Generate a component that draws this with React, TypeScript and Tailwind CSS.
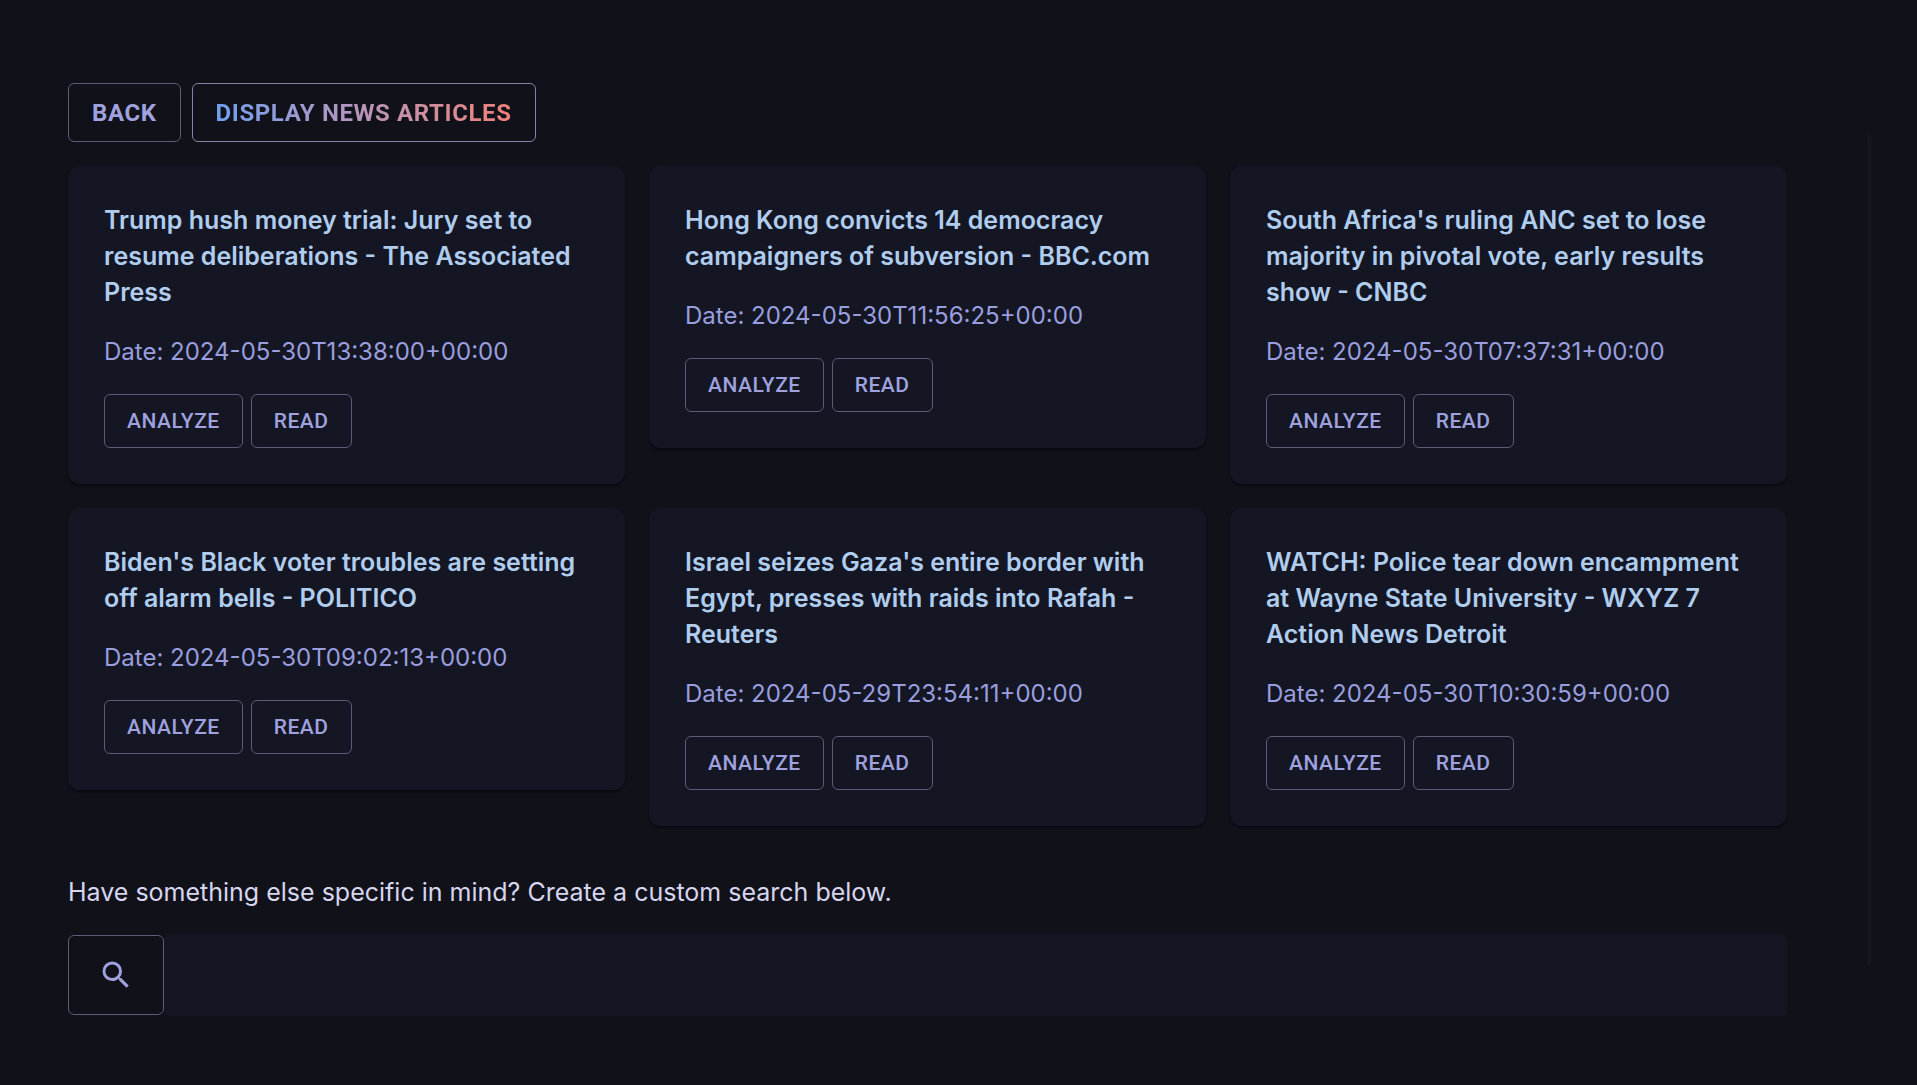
import React, { useState } from "react"
import { MdSearch } from "react-icons/md"

interface Article {
    title: string;
    date: string;
}

const articles: Article[] = [
    {
        title: "Trump hush money trial: Jury set to resume deliberations - The Associated Press",
        date: "2024-05-30T13:38:00+00:00",
    },
    {
        title: "Hong Kong convicts 14 democracy campaigners of subversion - BBC.com",
        date: "2024-05-30T11:56:25+00:00",
    },
    {
        title: "South Africa's ruling ANC set to lose majority in pivotal vote, early results show - CNBC",
        date: "2024-05-30T07:37:31+00:00",
    },
    {
        title: "Biden's Black voter troubles are setting off alarm bells - POLITICO",
        date: "2024-05-30T09:02:13+00:00",
    },
    {
        title: "Israel seizes Gaza's entire border with Egypt, presses with raids into Rafah - Reuters",
        date: "2024-05-29T23:54:11+00:00",
    },
    {
        title: "WATCH: Police tear down encampment at Wayne State University - WXYZ 7 Action News Detroit",
        date: "2024-05-30T10:30:59+00:00",
    },
]

function CardButton({ children }: { children: React.ReactNode }) {
    return (
        <button
            type="button"
            className="h-[54px] px-[22px] border border-[#5a5c78] rounded-md font-[Roboto,sans-serif] text-[21px] font-medium tracking-wide uppercase text-[#9fa2de] hover:bg-white/5"
        >
            {children}
        </button>
    )
}

function ArticleCard({ title, date }: Article) {
    return (
        <article className="p-9 rounded-xl bg-[#141624] shadow-[0_2px_2px_#0a0a12]">
            <h2 className="text-[25px] leading-9 font-semibold text-[#b0cdee]">{title}</h2>
            <p className="mt-6 text-[#9a9ede]">Date: {date}</p>
            <div className="mt-6 flex gap-2">
                <CardButton>Analyze</CardButton>
                <CardButton>Read</CardButton>
            </div>
        </article>
    )
}

export default function App() {
    const [query, setQuery] = useState("")

    return (
        <div className="min-h-screen flex bg-[#11111a] font-[Inter,sans-serif] text-2xl leading-9">
            <main className="flex-1 pt-[83px] pb-16 pl-[68px] pr-20">
                <div className="flex gap-[11px]">
                    <button
                        type="button"
                        className="h-[59px] px-[23px] border border-[#5a5c78] rounded-md font-[Roboto,sans-serif] font-bold tracking-wide text-[#9fa2de]"
                    >
                        BACK
                    </button>
                    <button
                        type="button"
                        className="h-[59px] px-[23px] border border-[#8184a6] rounded-md font-[Roboto,sans-serif] font-bold tracking-wide"
                    >
                        <span className="bg-linear-to-r from-[#6f9ff0] to-[#f08078] bg-clip-text text-transparent">
                            DISPLAY NEWS ARTICLES
                        </span>
                    </button>
                </div>

                <section className="mt-6 grid grid-cols-3 items-start gap-6">
                    {articles.map((article) => (
                        <ArticleCard key={article.date} {...article} />
                    ))}
                </section>

                <form onSubmit={(e) => e.preventDefault()}>
                    <label htmlFor="search" className="block mt-12 text-[25px] leading-9 text-[#d6d6ee]">
                        Have something else specific in mind? Create a custom search below.
                    </label>
                    <div className="mt-6 flex items-center">
                        <button
                            type="submit"
                            aria-label="Search"
                            className="flex items-center justify-center w-24 h-20 border border-[#5a5c78] rounded-md text-[#9fa2de]"
                        >
                            <MdSearch size={36} />
                        </button>
                        <input
                            id="search"
                            type="text"
                            value={query}
                            onChange={(e) => setQuery(e.target.value)}
                            className="flex-1 h-[82px] px-6 rounded-md bg-[#141624] text-[#d6d6ee] outline-none"
                        />
                    </div>
                </form>
            </main>
            <aside className="w-[5px] mt-[133px] mb-[120px] mr-[45px] rounded-r-md bg-[#161521]" />
        </div>
    )
}
